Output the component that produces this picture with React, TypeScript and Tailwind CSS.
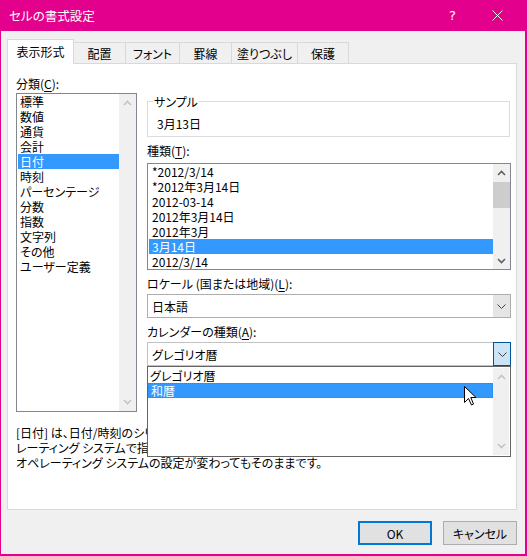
import React from "react";

const Up = ({ c }: { c: string }) => (
  <svg width="9" height="6" viewBox="0 0 9 6">
    <path d="M1 5 L4.5 1.5 L8 5" fill="none" stroke={c} strokeWidth="1.6" />
  </svg>
);
const Down = ({ c }: { c: string }) => (
  <svg width="9" height="6" viewBox="0 0 9 6">
    <path d="M1 1 L4.5 4.5 L8 1" fill="none" stroke={c} strokeWidth="1.6" />
  </svg>
);
const Chevron = () => (
  <svg width="9" height="5" viewBox="0 0 9 5">
    <path d="M0.5 0.5 L4.5 4.5 L8.5 0.5" fill="none" stroke="#404040" strokeWidth="1" />
  </svg>
);

const categories = [
  "標準",
  "数値",
  "通貨",
  "会計",
  "日付",
  "時刻",
  "パーセンテージ",
  "分数",
  "指数",
  "文字列",
  "その他",
  "ユーザー定義",
];

const formats = [
  "*2012/3/14",
  "*2012年3月14日",
  "2012-03-14",
  "2012年3月14日",
  "2012年3月",
  "3月14日",
  "2012/3/14",
];

const tabs = [
  { t: "配置", w: "w-[52px]" },
  { t: "フォント", w: "w-[54px]" },
  { t: "罫線", w: "w-[52px]" },
  { t: "塗りつぶし", w: "w-[66px]" },
  { t: "保護", w: "w-[51px]" },
];

export default function App() {
  return (
    <div className="w-[527px] h-[556px] bg-[#e3008c] pl-px pr-[2px] pb-[2px] flex flex-col font-['Noto_Sans_CJK_JP','Noto_Sans',sans-serif] [font-feature-settings:'palt'] text-[12px] leading-[15px] text-black select-none">
      {/* title bar */}
      <div className="h-[31px] shrink-0 flex items-center text-white">
        <span className="ml-[8px] text-[12.5px]">セルの書式設定</span>
        <span className="ml-auto mr-[36px] text-[13px] font-['DejaVu_Sans',sans-serif]">?</span>
        <svg width="11" height="11" viewBox="0 0 11 11" className="mr-[22px]">
          <path d="M0.5 0.5 L10.5 10.5 M10.5 0.5 L0.5 10.5" stroke="white" strokeWidth="1" />
        </svg>
      </div>

      {/* body */}
      <div className="flex-1 bg-[#f0f0f0] flex flex-col pl-[6px] pr-[8px] pt-[8px]">
        {/* tabs */}
        <div className="flex items-end h-[24px] relative z-10">
          <div className="w-[67px] h-[25px] -mb-px bg-white border border-b-0 border-[#d9d9d9] flex items-center justify-center pb-[2px]">
            表示形式
          </div>
          {tabs.map((t) => (
            <div
              key={t.t}
              className={`${t.w} h-[21px] bg-[#f0f0f0] border border-l-0 border-b-0 border-[#d9d9d9] flex items-center justify-center`}
            >
              {t.t}
            </div>
          ))}
        </div>

        {/* panel */}
        <div className="h-[447px] bg-white border border-[#d9d9d9] pl-[8px] pt-[12px] flex flex-col">
          <div className="flex">
            {/* left column */}
            <div className="w-[121px] flex flex-col">
              <div>
                分類(<span className="underline underline-offset-2">C</span>):
              </div>
              <div className="mt-[2px] h-[319px] border border-[#828790] flex">
                <div className="flex-1 pl-px">
                  {categories.map((c) => (
                    <div
                      key={c}
                      className={`h-[15px] pl-[2px] whitespace-nowrap ${c === "日付" ? "bg-[#3399ff] text-white" : ""}`}
                    >
                      {c}
                    </div>
                  ))}
                </div>
                <div className="w-[17px] bg-[#f0f0f0] flex flex-col items-center justify-between py-[6px]">
                  <Up c="#c4c4c4" />
                  <Down c="#c4c4c4" />
                </div>
              </div>
            </div>

            {/* right column */}
            <div className="ml-[10px] w-[364px] flex flex-col pt-[18px]">
              <fieldset className="h-[43px] w-[363px] border border-[#dcdcdc] m-0 p-0">
                <legend className="ml-[5px] px-px leading-[15px]">サンプル</legend>
                <div className="mt-[7px] ml-[9px]">3月13日</div>
              </fieldset>

              <div className="mt-[6px]">
                種類(<span className="underline underline-offset-2">T</span>):
              </div>
              <div className="mt-[5px] h-[107px] border border-[#828790] flex">
                <div className="flex-1 pl-px">
                  {formats.map((f, i) => (
                    <div
                      key={i}
                      className={`h-[15px] pl-[3px] whitespace-nowrap ${i === 5 ? "bg-[#3399ff] text-white" : ""}`}
                    >
                      {f}
                    </div>
                  ))}
                </div>
                <div className="w-[17px] bg-[#f0f0f0] flex flex-col items-center">
                  <div className="h-[17px] flex items-center justify-center">
                    <Up c="#606060" />
                  </div>
                  <div className="w-[17px] h-[26px] bg-[#cdcdcd] mt-px" />
                  <div className="flex-1" />
                  <div className="h-[17px] flex items-center justify-center">
                    <Down c="#606060" />
                  </div>
                </div>
              </div>

              <div className="mt-[6px] whitespace-nowrap">
                ロケール (国または地域)(<span className="underline underline-offset-2">L</span>):
              </div>
              <div className="mt-[3px] h-[24px] w-[364px] border border-[#adadad] flex">
                <div className="flex-1 pl-[4px] flex items-center">日本語</div>
                <div className="w-[17px] bg-[#e5e5e5] flex items-center justify-center">
                  <Chevron />
                </div>
              </div>

              <div className="mt-[6px] whitespace-nowrap">
                カレンダーの種類(<span className="underline underline-offset-2">A</span>):
              </div>
              <div className="mt-[3px] h-[24px] w-[364px] flex relative">
                <div className="flex-1 border border-r-0 border-[#c2c2c2] pl-[4px] flex items-center">
                  グレゴリオ暦
                </div>
                <div className="w-[18px] bg-[#cce4f7] border border-[#005499] flex items-center justify-center">
                  <Chevron />
                </div>

                {/* dropdown list */}
                <div className="absolute left-0 top-[24px] w-[364px] h-[91px] bg-white border border-[#646464] flex z-20">
                  <div className="flex-1 pl-0 pt-px relative">
                    <div className="h-[15px] pl-[2px] leading-[15px]">グレゴリオ暦</div>
                    <div className="h-[15px] pl-[2px] leading-[13px] bg-[#3399ff] text-white border border-dotted border-[#c86400]">
                      和暦
                    </div>
                    <svg
                      width="13"
                      height="20"
                      viewBox="0 0 13 20"
                      className="absolute left-[316px] top-[19px]"
                    >
                      <path
                        d="M0.5 0.5 L0.5 16.5 L4.5 12.5 L7.5 19 L9.5 18 L6.8 11.5 L12 11.5 Z"
                        fill="white"
                        stroke="black"
                        strokeWidth="1"
                        strokeLinejoin="miter"
                      />
                    </svg>
                  </div>
                  <div className="w-[16px] mr-px my-px bg-[#f0f0f0] flex flex-col items-center justify-between py-[6px]">
                    <Up c="#c4c4c4" />
                    <Down c="#c4c4c4" />
                  </div>
                </div>
              </div>
            </div>
          </div>

          {/* description (partly hidden behind the open dropdown) */}
          <div className="mt-[13px] w-[480px] overflow-hidden">
            <div className="whitespace-nowrap overflow-hidden">
              [日付] は、日付/時刻のシリアル値を日付形式で表示します。アスタリスク (*) で始まる日付形式は、オペ
            </div>
            <div className="whitespace-nowrap overflow-hidden">
              レーティング システムで指定された地域の日付/時刻の設定の変更に対応します。
            </div>
            <div className="whitespace-nowrap">
              オペレーティング システムの設定が変わってもそのままです。
            </div>
          </div>
        </div>

        {/* buttons */}
        <div className="mt-[11px] flex justify-end gap-[11px]">
          <div className="w-[74px] h-[24px] bg-[#e1e1e1] border-2 border-[#0078d7] flex items-center justify-center">
            OK
          </div>
          <div className="w-[74px] h-[24px] bg-[#e1e1e1] border border-[#adadad] flex items-center justify-center">
            キャンセル
          </div>
        </div>
      </div>
    </div>
  );
}
